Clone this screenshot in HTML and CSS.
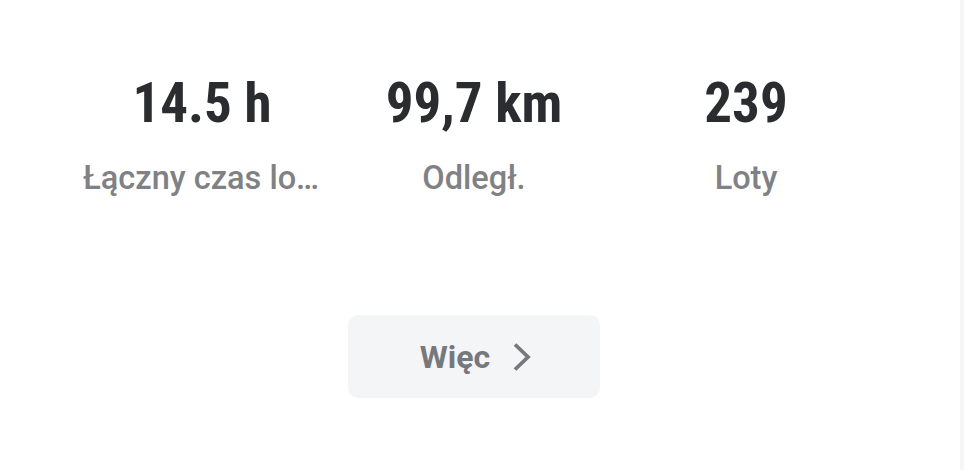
FILE: index.html
```html
<!DOCTYPE html>
<html lang="pl">
<head>
    <meta charset="UTF-8">
    <meta name="viewport" content="width=device-width, initial-scale=1.0">
    <title>Statystyki lotów</title>
    <link rel="stylesheet" href="styles.css">
</head>
<body>
    <div class="strona">
        <div class="karta">
            <div class="statystyki">
                <div class="stat">
                    <div class="wartosc">14.5 h</div>
                    <div class="etykieta">Łączny czas lotu</div>
                </div>
                <div class="stat">
                    <div class="wartosc">99,7 km</div>
                    <div class="etykieta">Odległ.</div>
                </div>
                <div class="stat">
                    <div class="wartosc">239</div>
                    <div class="etykieta">Loty</div>
                </div>
            </div>

            <div class="akcje">
                <button class="wiecej">
                    Więc
                    <svg class="strzalka" width="24" height="30" viewBox="0 0 24 30">
                        <polyline points="5,2.5 18,15 5,27.5" fill="none" stroke="currentColor" stroke-width="3.8" stroke-linejoin="miter" />
                    </svg>
                </button>
            </div>
        </div>
        <div class="pasek"></div>
    </div>
</body>
</html>
```

FILE: styles.css
```css
body {
    margin: 0;
    padding: 0;
    background-color: #ffffff;
    font-family: Roboto, "Liberation Sans", sans-serif;
}

.strona {
    display: flex;
    height: 470px;
}

.karta {
    width: 948px;
    background-color: #ffffff;
}

.pasek {
    margin-left: auto;
    width: 4px;
    background-color: #f5f6f8;
}

.statystyki {
    display: flex;
    padding: 68px 66px 0 66px;
}

.stat {
    width: 272px;
    text-align: center;
}

.wartosc {
    font-size: 55px;
    line-height: 70px;
    font-weight: 700;
    font-stretch: 75%;
    color: #2a2c30;
}

/* etykiety przycinane wielokropkiem */
.etykieta {
    margin: 20px auto 0 auto;
    max-width: 238px;
    font-size: 32.5px;
    line-height: 40px;
    font-weight: 500;
    color: #808184;
    white-space: nowrap;
    overflow: hidden;
    text-overflow: ellipsis;
}

.akcje {
    display: flex;
    justify-content: center;
    margin-top: 117px;
}

.wiecej {
    display: flex;
    align-items: center;
    justify-content: center;
    gap: 20px;
    width: 252px;
    height: 83px;
    padding: 0 0 0 6px;
    border: none;
    border-radius: 10px;
    background-color: #f4f5f7;
    color: #76787c;
    font-family: Roboto, "Liberation Sans", sans-serif;
    font-size: 32px;
    font-weight: 700;
    cursor: pointer;
}

.strzalka {
    display: block;
}
```
